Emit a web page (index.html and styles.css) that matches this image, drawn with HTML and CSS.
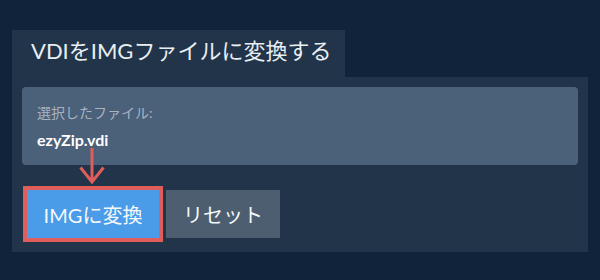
FILE: index.html
```
<!DOCTYPE html>
<html lang="ja">
<head>
    <meta charset="UTF-8">
    <meta name="viewport" content="width=device-width, initial-scale=1.0">
    <title>VDIをIMGファイルに変換する</title>
    <link rel="stylesheet" href="styles.css">
</head>

<body>
    <div class="converter">
        <div class="tab">VDIをIMGファイルに変換する</div>
        <div class="panel">
            <div class="file-box">
                <div class="file-label">選択したファイル:</div>
                <div class="file-name">ezyZip.vdi</div>
            </div>
            <svg class="arrow" width="26" height="36" viewBox="0 0 26 36">
                <path d="M13 0 V34 M1.5 19.5 L13 34 L24.5 19.5" fill="none" stroke="#df5d5b" stroke-width="3"/>
            </svg>
            <div class="actions">
                <button class="btn btn-convert">IMGに変換</button>
                <button class="btn btn-reset">リセット</button>
            </div>
        </div>
    </div>
</body>
</html>
```

FILE: styles.css
```
body {
    margin: 0;
    padding: 0;
    background-color: #10233a;
    font-family: Lato, "Noto Sans CJK JP", sans-serif;
    color: #eef2f6;
}
.converter {
    padding: 30px 12px 0 12px;
}
.tab {
    display: inline-block;
    width: 314px;
    height: 47px;
    padding-left: 19px;
    background-color: #213449;
    font-size: 22px;
    line-height: 42px;
    color: #e9eef3;
}
.panel {
    position: relative;
    padding: 10px;
    background-color: #213449;
}
.file-box {
    height: 78px;
    box-sizing: border-box;
    padding: 16px 15px 0 15px;
    background-color: #4b6079;
    border-radius: 4px;
}
.file-label {
    font-size: 14px;
    line-height: 20px;
    color: #a7b3c1;
}
.file-name {
    margin-top: 6px;
    font-size: 16px;
    font-weight: bold;
    line-height: 22px;
    color: #ffffff;
}
.arrow {
    position: absolute;
    left: 67px;
    top: 71px;
}
.actions {
    display: flex;
    gap: 7px;
    margin-top: 25px;
    padding-left: 5px;
    padding-bottom: 4px;
}
.btn {
    height: 48px;
    border: none;
    border-radius: 0;
    font-family: Lato, "Noto Sans CJK JP", sans-serif;
    font-size: 20px;
    color: #f4f7fa;
    padding: 0;
}
.btn-convert {
    width: 132px;
    background-color: #4a9ce8;
    outline: 4px solid #df5d5b;
}
.btn-reset {
    width: 114px;
    background-color: #4d5e70;
}
```
